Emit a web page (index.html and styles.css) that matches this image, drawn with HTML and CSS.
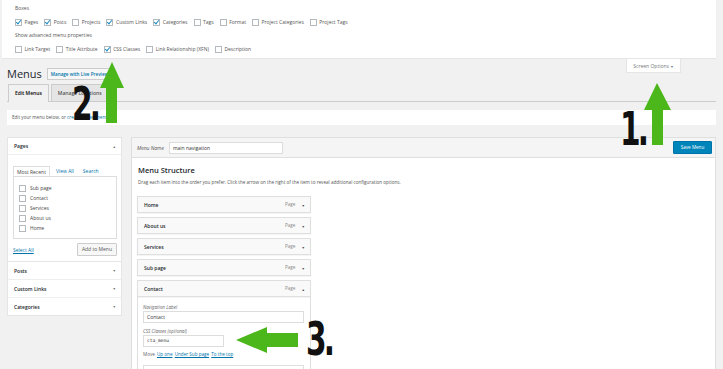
FILE: index.html
```html
<!DOCTYPE html>
<html lang="en">
<head>
    <meta charset="UTF-8">
    <title>Menus</title>
    <link rel="stylesheet" href="styles.css">
</head>
<body>

    <div class="page">
        <div class="screen-meta">
            <div class="legend">Boxes</div>
            <div class="opts">
                <label class="opt"><span class="cb on"></span>Pages</label>
                <label class="opt"><span class="cb on"></span>Posts</label>
                <label class="opt"><span class="cb"></span>Projects</label>
                <label class="opt"><span class="cb on"></span>Custom Links</label>
                <label class="opt"><span class="cb on"></span>Categories</label>
                <label class="opt"><span class="cb"></span>Tags</label>
                <label class="opt"><span class="cb"></span>Format</label>
                <label class="opt"><span class="cb"></span>Project Categories</label>
                <label class="opt"><span class="cb"></span>Project Tags</label>
            </div>
            <div class="legend">Show advanced menu properties</div>
            <div class="opts">
                <label class="opt"><span class="cb"></span>Link Target</label>
                <label class="opt"><span class="cb"></span>Title Attribute</label>
                <label class="opt"><span class="cb on"></span>CSS Classes</label>
                <label class="opt"><span class="cb"></span>Link Relationship (XFN)</label>
                <label class="opt"><span class="cb"></span>Description</label>
            </div>
        </div>

        <div class="content">
            <div class="title-row">
                <div class="title">
                    <h1>Menus</h1>
                    <a class="live">Manage with Live Preview</a>
                </div>
                <div class="screen-tab">Screen Options <span class="caret">&#9660;</span></div>
            </div>

            <div class="tabs">
                <span class="tab active">Edit Menus</span>
                <span class="tab">Manage Locations</span>
            </div>

            <div class="notice">Edit your menu below, or <a>create a new menu</a>.</div>

            <div class="columns">
                <div class="side">
                    <div class="box">
                        <div class="box-head">Pages <span class="caret">&#9650;</span></div>
                        <div class="box-body">
                            <div class="mini-tabs">
                                <span class="mini-tab active">Most Recent</span>
                                <span class="mini-tab">View All</span>
                                <span class="mini-tab">Search</span>
                            </div>
                            <div class="mini-panel">
                                <label class="row"><span class="cb"></span>Sub page</label>
                                <label class="row"><span class="cb"></span>Contact</label>
                                <label class="row"><span class="cb"></span>Services</label>
                                <label class="row"><span class="cb"></span>About us</label>
                                <label class="row"><span class="cb"></span>Home</label>
                            </div>
                            <div class="box-foot">
                                <a class="select-all">Select All</a>
                                <span class="btn">Add to Menu</span>
                            </div>
                        </div>
                    </div>
                    <div class="section">Posts <span class="caret">&#9660;</span></div>
                    <div class="section">Custom Links <span class="caret">&#9660;</span></div>
                    <div class="section">Categories <span class="caret">&#9660;</span></div>
                </div>

                <div class="main">
                    <div class="main-head">
                        <span class="name-label">Menu Name</span>
                        <span class="input name-input">main navigation</span>
                        <span class="save">Save Menu</span>
                    </div>
                    <div class="main-body">
                        <h3>Menu Structure</h3>
                        <p class="desc">Drag each item into the order you prefer. Click the arrow on the right of the item to reveal additional configuration options.</p>
                        <div class="items">
                            <div class="item"><span class="item-title">Home</span><span class="item-type">Page <span class="caret">&#9660;</span></span></div>
                            <div class="item"><span class="item-title">About us</span><span class="item-type">Page <span class="caret">&#9660;</span></span></div>
                            <div class="item"><span class="item-title">Services</span><span class="item-type">Page <span class="caret">&#9660;</span></span></div>
                            <div class="item"><span class="item-title">Sub page</span><span class="item-type">Page <span class="caret">&#9660;</span></span></div>
                            <div class="item open"><span class="item-title">Contact</span><span class="item-type">Page <span class="caret">&#9650;</span></span></div>
                            <div class="item-settings">
                                <div class="field-label">Navigation Label</div>
                                <div class="input wide">Contact</div>
                                <div class="field-label">CSS Classes (optional)</div>
                                <div class="input short mono">cta_menu</div>
                                <div class="move">Move <a>Up one</a> <a>Under Sub page</a> <a>To the top</a></div>
                                <div class="sub-box"></div>
                            </div>
                        </div>
                    </div>
                </div>
            </div>
        </div>
    </div>

    <svg class="arrows" width="723" height="369" viewBox="0 0 723 369">
        <polygon points="112,62 124,88 117,88 117,123 106,123 106,88 100,88" />
        <polygon points="657,83 671,110 663,110 663,145 652,145 652,110 644,110" />
        <polygon points="236,340 267,327 267,333 298,333 298,347 267,347 267,353" />
    </svg>
    <div class="num num-2">2.</div>
    <div class="num num-1">1.</div>
    <div class="num num-3">3.</div>

</body>
</html>
```

FILE: styles.css
```css
body {
    margin: 0;
    background-color: #f1f1f1;
    font-family: 'Open Sans', 'Noto Sans', sans-serif;
    font-size: 5px;
    color: #444;
    width: 723px;
    height: 369px;
    overflow: hidden;
    position: relative;
}
a {
    color: #0073aa;
}
.page {
    padding-right: 7px;
}
.screen-meta {
    margin-left: 2px;
    background-color: white;
    border-bottom: 1px solid #e5e5e5;
    height: 56px;
    padding: 2px 0 0 13px;
}
.legend {
    line-height: 13px;
    height: 13px;
    color: #555;
}
.opts {
    display: flex;
    height: 14px;
    align-items: center;
}
.opt {
    display: flex;
    align-items: center;
    margin-right: 6px;
    color: #555;
}
.cb {
    display: inline-block;
    position: relative;
    width: 5px;
    height: 5px;
    border: 1px solid #b4b9be;
    background-color: white;
    margin-right: 2.5px;
    flex-shrink: 0;
}
.cb.on::after {
    content: "";
    position: absolute;
    left: 1px;
    top: -1px;
    width: 2px;
    height: 4px;
    border-right: 1px solid #1e8cbe;
    border-bottom: 1px solid #1e8cbe;
    transform: rotate(40deg);
}
.content {
    padding-left: 7px;
}
.title-row {
    display: flex;
    align-items: flex-start;
    height: 21px;
}
.title {
    display: flex;
    align-items: center;
    padding-top: 9px;
}
h1 {
    margin: 0;
    font-size: 11px;
    line-height: 12px;
    font-weight: normal;
    color: #23282d;
}
.live {
    margin-left: 5px;
    height: 10px;
    line-height: 10px;
    padding: 0 3px;
    border: 1px solid #ccc;
    background-color: #f7f7f7;
    font-size: 4.6px;
    font-weight: 600;
}
.screen-tab {
    margin-left: auto;
    margin-right: 35px;
    width: 55px;
    height: 14px;
    line-height: 14px;
    text-align: center;
    background-color: white;
    border: 1px solid #e5e5e5;
    border-top: none;
    box-sizing: border-box;
    color: #72777c;
}
.caret {
    font-size: 3.5px;
    color: #72777c;
    vertical-align: middle;
}
.tabs {
    display: flex;
    margin-top: 4px;
    padding-left: 1px;
    border-bottom: 1px solid #ccc;
    height: 17px;
}
.tab {
    padding: 0 6px;
    line-height: 16px;
    height: 16px;
    border: 1px solid #ccc;
    border-bottom: none;
    background-color: #e5e5e5;
    font-weight: 600;
    color: #555;
    margin-right: 2px;
}
.tab.active {
    background-color: #f1f1f1;
    color: #000;
    height: 17px;
}
.notice {
    margin-top: 8px;
    height: 15px;
    line-height: 15px;
    background-color: white;
    padding-left: 5px;
    font-size: 4.6px;
    color: #555;
}
.columns {
    display: flex;
    gap: 9px;
    margin-top: 12px;
    align-items: flex-start;
}
.side {
    width: 115px;
    background-color: white;
    border: 1px solid #e5e5e5;
    box-sizing: border-box;
}
.box-head,
.section {
    display: flex;
    justify-content: space-between;
    align-items: center;
    height: 16px;
    padding: 0 5px 0 6px;
    font-weight: 600;
    color: #23282d;
    border-bottom: 1px solid #eee;
}
.section {
    height: 17px;
}
.section:last-child {
    border-bottom: none;
}
.box-body {
    padding: 11px 4px 5px 5px;
    border-bottom: 1px solid #e5e5e5;
}
.mini-tabs {
    display: flex;
    height: 10px;
}
.mini-tab {
    padding: 0 3px;
    line-height: 10px;
    color: #0073aa;
    margin-right: 3px;
}
.mini-tab.active {
    color: #444;
    border: 1px solid #ddd;
    border-bottom: 1px solid white;
    background-color: white;
    position: relative;
    z-index: 1;
}
.mini-panel {
    border: 1px solid #ddd;
    height: 51px;
    padding: 6px 4px 4px 5px;
}
.row {
    display: flex;
    align-items: center;
    height: 10px;
}
.row .cb {
    margin-right: 4px;
}
.box-foot {
    display: flex;
    justify-content: space-between;
    align-items: center;
    margin-top: 4px;
}
.select-all {
    text-decoration: underline;
}
.btn {
    height: 11px;
    line-height: 11px;
    padding: 0 4px;
    border: 1px solid #ccc;
    background-color: #f7f7f7;
    color: #555;
    border-radius: 1px;
}
.main {
    flex: 1;
}
.main-head {
    display: flex;
    align-items: center;
    height: 19px;
    padding: 0 3px 0 5px;
    background-color: #f5f5f5;
    border: 1px solid #dfdfdf;
}
.name-label {
    font-style: italic;
    color: #555;
}
.input {
    height: 10px;
    line-height: 10px;
    border: 1px solid #ddd;
    background-color: white;
    padding-left: 3px;
    color: #333;
}
.name-input {
    margin-left: 5px;
    width: 109px;
}
.save {
    margin-left: auto;
    width: 37px;
    height: 11px;
    line-height: 11px;
    text-align: center;
    background-color: #0085ba;
    border: 1px solid #0073aa;
    color: white;
    font-size: 4.6px;
    border-radius: 1px;
}
.main-body {
    background-color: white;
    border: 1px solid #dfdfdf;
    border-top: none;
    height: 260px;
    padding: 7px 5px;
}
h3 {
    margin: 0;
    padding-left: 1px;
    font-size: 7.5px;
    line-height: 10px;
    font-weight: 600;
    color: #23282d;
}
.desc {
    margin: 3px 0 0 1px;
    line-height: 8px;
    font-size: 4.6px;
    color: #555;
}
.items {
    margin-top: 10px;
    width: 174px;
}
.item {
    display: flex;
    justify-content: space-between;
    align-items: center;
    height: 15px;
    border: 1px solid #dfdfdf;
    background-color: #f9f9f9;
    padding: 0 5px 0 6px;
    margin-bottom: 4px;
    box-shadow: 0 1px 1px rgba(0, 0, 0, 0.04);
}
.item.open {
    margin-bottom: 0;
}
.item-title {
    font-weight: 600;
    color: #23282d;
}
.item-type {
    color: #888;
    font-size: 4.6px;
}
.item-type .caret {
    margin-left: 5px;
    color: #555;
}
.item-settings {
    border: 1px solid #dfdfdf;
    border-top: none;
    padding: 6px 6px 0 5px;
    height: 80px;
}
.field-label {
    font-style: italic;
    color: #666;
    font-size: 4.6px;
    line-height: 8px;
}
.input.wide {
    margin-bottom: 4px;
}
.input.short {
    width: 76px;
}
.mono {
    font-family: 'DejaVu Sans Mono', 'Liberation Mono', monospace;
    font-size: 4.6px;
}
.move {
    margin-top: 3px;
    line-height: 8px;
    font-size: 4.6px;
    color: #666;
}
.move a {
    text-decoration: underline;
    margin-left: 1px;
}
.sub-box {
    margin-top: 7px;
    height: 20px;
    border: 1px solid #dfdfdf;
}
.arrows {
    position: absolute;
    left: 0;
    top: 0;
    fill: #4cb71a;
}
.num {
    position: absolute;
    font-family: 'Liberation Sans Narrow', 'DejaVu Sans Condensed', sans-serif;
    font-weight: bold;
    font-size: 47px;
    line-height: 47px;
    color: #111;
    transform: scaleX(0.7);
    transform-origin: left top;
    letter-spacing: -4px;
}
.num-2 {
    left: 72px;
    top: 80px;
}
.num-1 {
    left: 620px;
    top: 105px;
}
.num-3 {
    left: 306px;
    top: 315px;
}
```
